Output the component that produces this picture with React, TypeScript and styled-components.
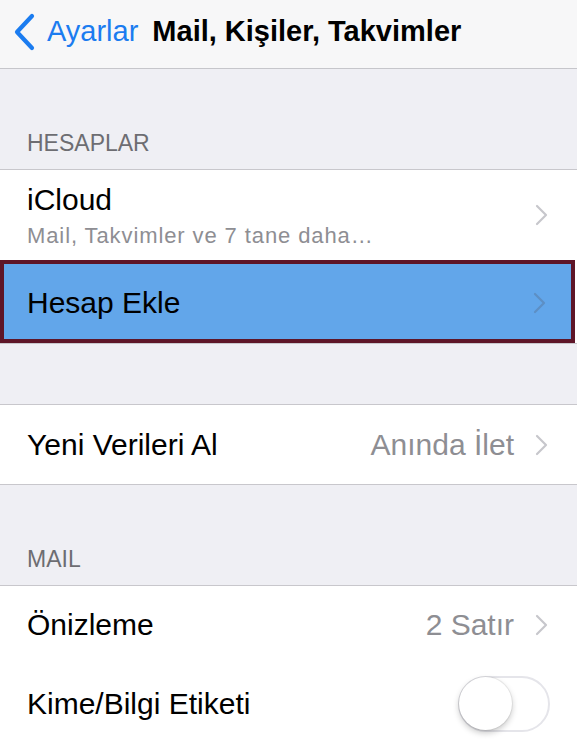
import styled, { createGlobalStyle } from 'styled-components'

const GlobalStyle = createGlobalStyle`
    html, body {
        margin: 0;
        padding: 0;
        background: #efeff4;
        font-family: 'Liberation Sans', Arial, sans-serif;
        -webkit-font-smoothing: antialiased;
    }
`

const Chevron = ({ color = '#c7c7cc' }: { color?: string }) => (
    <svg width="13" height="22" viewBox="0 0 13 22">
        <path
            d="M2 2 L11 11 L2 20"
            fill="none"
            stroke={color}
            strokeWidth="2.2"
            strokeLinecap="round"
            strokeLinejoin="round"
        />
    </svg>
)

const BackArrow = () => (
    <svg width="24" height="38" viewBox="0 0 24 38">
        <path
            d="M19 3 L4 19 L19 35"
            fill="none"
            stroke="#1b7cf0"
            strokeWidth="4.2"
            strokeLinecap="round"
            strokeLinejoin="round"
        />
    </svg>
)

const App = () => {
    return (
        <Page>
            <GlobalStyle />
            <NavBar>
                <BackButton>
                    <BackArrow />
                    <span>Ayarlar</span>
                </BackButton>
                <NavTitle>Mail, Kişiler, Takvimler</NavTitle>
            </NavBar>

            <SectionHeader>HESAPLAR</SectionHeader>
            <Group>
                <Row $height={90}>
                    <RowText>
                        <Label>iCloud</Label>
                        <SubLabel>Mail, Takvimler ve 7 tane daha…</SubLabel>
                    </RowText>
                    <Chevron />
                </Row>
                <SelectedRow>
                    <Label>Hesap Ekle</Label>
                    <Chevron color="#5d8fc4" />
                </SelectedRow>
            </Group>

            <Spacer />
            <Group>
                <Row $height={79}>
                    <Label>Yeni Verileri Al</Label>
                    <Detail>Anında İlet</Detail>
                    <Chevron />
                </Row>
            </Group>

            <SectionHeader>MAIL</SectionHeader>
            <Group>
                <Row $height={78} $divider>
                    <Label>Önizleme</Label>
                    <Detail>2 Satır</Detail>
                    <Chevron />
                </Row>
                <Row $height={79}>
                    <Label>Kime/Bilgi Etiketi</Label>
                    <Toggle>
                        <Knob />
                    </Toggle>
                </Row>
            </Group>
        </Page>
    )
}

export default App

const Page = styled.div`
    width: 577px;
    min-height: 743px;
    background: #efeff4;
    overflow: hidden;
`

const NavBar = styled.header`
    height: 69px;
    box-sizing: border-box;
    display: flex;
    align-items: center;
    gap: 14px;
    padding: 0 0 5px 13px;
    background: #f7f7f8;
    border-bottom: 1px solid #c6c6cb;
`

const BackButton = styled.div`
    display: flex;
    align-items: center;
    gap: 10px;
    color: #1b7cf0;
    font-size: 29px;

    svg {
        margin-top: 1px;
    }
`

const NavTitle = styled.h1`
    margin: 0;
    font-size: 29px;
    font-weight: 700;
    color: #000;
`

const SectionHeader = styled.div`
    height: 100px;
    box-sizing: border-box;
    display: flex;
    align-items: flex-end;
    padding: 0 0 12px 27px;
    font-size: 23px;
    color: #6d6d72;
`

const Spacer = styled.div`
    height: 60px;
`

const Group = styled.section`
    background: #fff;
    border-top: 1px solid #c8c7cc;
    border-bottom: 1px solid #c8c7cc;
`

const Row = styled.div<{ $height: number; $divider?: boolean }>`
    position: relative;
    height: ${({ $height }) => $height}px;
    display: flex;
    align-items: center;
    padding: 0 29px 0 27px;
    background: #fff;

    ${({ $divider }) =>
        $divider &&
        `
        &::after {
            content: '';
            position: absolute;
            left: 27px;
            right: 0;
            bottom: -1px;
            height: 1px;
            background: #c8c7cc;
        }
    `}
`

const SelectedRow = styled.div`
    height: 83px;
    box-sizing: border-box;
    margin-right: 2px;
    display: flex;
    align-items: center;
    padding: 2px 25px 0 23px;
    background: #62a6ea;
    border: 4px solid #5e1528;
`

const RowText = styled.div`
    flex: 1;
    display: flex;
    flex-direction: column;
    gap: 6px;
    padding-top: 2px;
`

const Label = styled.span`
    flex: 1;
    font-size: 30px;
    color: #000;
`

const SubLabel = styled.span`
    font-size: 22px;
    letter-spacing: 0.9px;
    color: #8e8e93;
`

const Detail = styled.span`
    font-size: 30px;
    color: #8e8e93;
    margin-right: 21px;
`

const Toggle = styled.div`
    width: 92px;
    height: 56px;
    box-sizing: border-box;
    margin-right: -2px;
    border-radius: 28px;
    border: 2px solid #e5e5ea;
    background: #fff;
    display: flex;
    align-items: center;
`

const Knob = styled.div`
    width: 53px;
    height: 53px;
    margin-left: -1px;
    border-radius: 50%;
    background: #fff;
    box-shadow: 0 3px 6px rgba(0, 0, 0, 0.22), 0 0 0 1px rgba(0, 0, 0, 0.06);
`
